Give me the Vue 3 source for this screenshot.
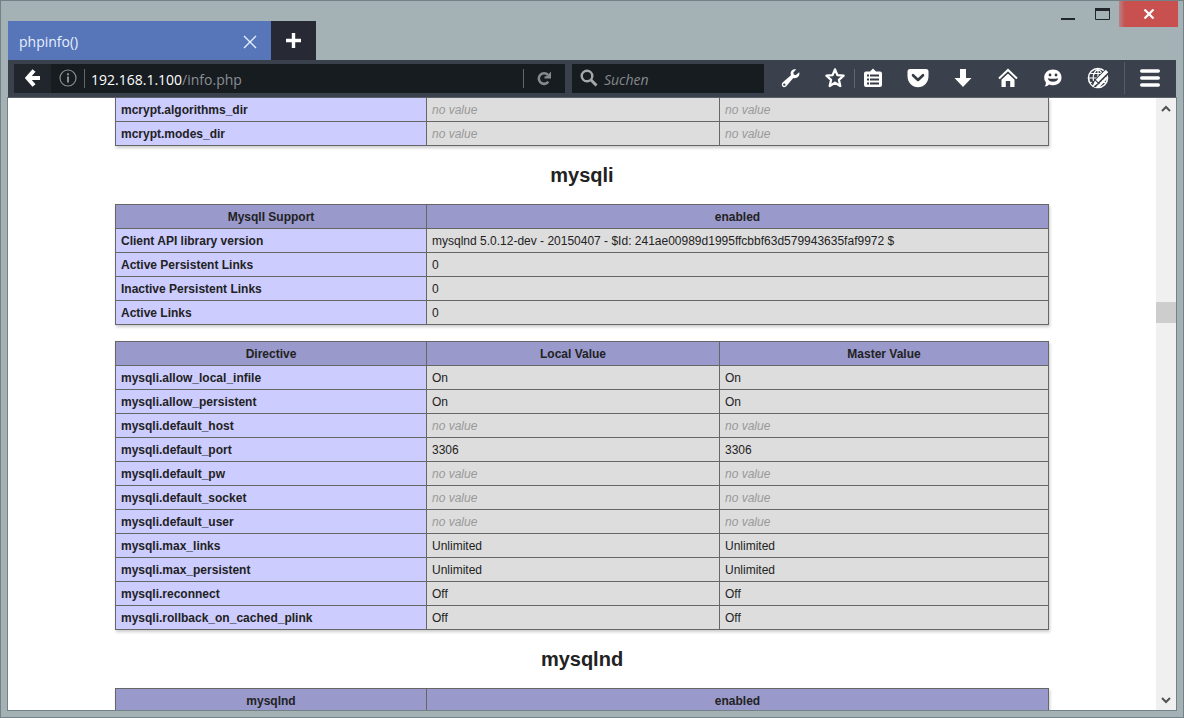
<script setup>
const mcrypt = ['mcrypt.algorithms_dir', 'mcrypt.modes_dir']
const support = [
  ['Client API library version', 'mysqlnd 5.0.12-dev - 20150407 - $Id: 241ae00989d1995ffcbbf63d579943635faf9972 $'],
  ['Active Persistent Links', '0'],
  ['Inactive Persistent Links', '0'],
  ['Active Links', '0']
]
const directives = [
  ['mysqli.allow_local_infile', 'On'],
  ['mysqli.allow_persistent', 'On'],
  ['mysqli.default_host', ''],
  ['mysqli.default_port', '3306'],
  ['mysqli.default_pw', ''],
  ['mysqli.default_socket', ''],
  ['mysqli.default_user', ''],
  ['mysqli.max_links', 'Unlimited'],
  ['mysqli.max_persistent', 'Unlimited'],
  ['mysqli.reconnect', 'Off'],
  ['mysqli.rollback_on_cached_plink', 'Off']
]
</script>

<template>
  <div class="window">
    <header class="titlebar">
      <div class="tab">
        <span>phpinfo()</span>
        <button class="tab-close" aria-label="Close tab">
          <svg width="14" height="14" viewBox="0 0 14 14"><path d="M1 1 13 13M13 1 1 13" stroke="#e6f0ff" stroke-width="1.4" /></svg>
        </button>
      </div>
      <button class="new-tab" aria-label="New tab">
        <svg width="17" height="17" viewBox="0 0 17 17"><path d="M8.500 1V16M1 8.500H16" stroke="#fff" stroke-width="3.400" /></svg>
      </button>
      <div class="controls">
        <button class="ctl" aria-label="Minimize">
          <svg width="14" height="14" viewBox="0 0 14 14"><path d="M0 12H14" stroke="#20262c" stroke-width="2" /></svg>
        </button>
        <button class="ctl" aria-label="Maximize">
          <svg width="15" height="12" viewBox="0 0 15 12"><path d="M.5.500H14.500V11.500H.5Z" fill="none" stroke="#20262c" /><path d="M0 0H15V3H0Z" fill="#20262c" /></svg>
        </button>
        <button class="close" aria-label="Close">
          <svg width="12" height="10" viewBox="0 0 12 10"><path d="M1.500.5 10.500 9.500M10.500.5 1.500 9.500" stroke="#fff" stroke-width="2.200" /></svg>
        </button>
      </div>
    </header>

    <nav class="toolbar" aria-label="Navigation">
      <button class="back" aria-label="Back">
        <svg width="16" height="18" viewBox="0 0 16 18"><path d="M9 1.500 2.500 9 9 16.500M3 9H15" fill="none" stroke="#fff" stroke-width="4" /></svg>
      </button>
      <div class="urlbar">
        <button class="info" aria-label="Site information">
          <svg width="18" height="18" viewBox="0 0 18 18"><circle cx="9" cy="9" r="8" fill="none" stroke="#8b8e91" stroke-width="1.200" /><path d="M9 7.500V13.500M9 4.300V6.200" stroke="#8b8e91" stroke-width="2" /></svg>
        </button>
        <span class="thin-sep"></span>
        <a class="address" href="#"><b>192.168.1.100</b>/info.php</a>
        <span class="thin-sep"></span>
        <button class="reload" aria-label="Reload">
          <svg width="15" height="15" viewBox="0 0 15 15"><path d="M11.300 10.800A5.300 5.300 0 1 1 11 4" fill="none" stroke="#868a8c" stroke-width="2.600" /><path d="M14 .5V7.500H7.500V5.500L10 5Z" fill="#868a8c" /></svg>
        </button>
      </div>
      <label class="search">
        <svg width="18" height="18" viewBox="0 0 18 18"><circle cx="7" cy="7" r="5.300" fill="none" stroke="#a5a8aa" stroke-width="2.400" /><path d="M10.800 10.800 16.500 16.500" stroke="#a5a8aa" stroke-width="3" /></svg>
        <input type="text" placeholder="Suchen" aria-label="Suchen" />
      </label>
      <div class="group first">
        <button aria-label="Developer tools">
          <svg width="20" height="20" viewBox="0 0 20 20"><path fill="#fff" fill-rule="evenodd" d="M18.200 4.200 15 7.100 12.900 6.700 12.300 4.600 15.200 1.600C12.500.4 9.500 2.600 9.600 5.600L9.900 7.300 1.600 14.500C0 16.200.8 18.800 3 19.200 4.200 19.300 5.200 18.500 5.700 17.800L12.300 10C15.700 10.900 19.300 8.300 18.200 4.200ZM3.300 15.400A1.200 1.200 0 1 1 3.300 17.800A1.200 1.200 0 1 1 3.300 15.400Z" /></svg>
        </button>
        <button aria-label="Bookmark this page">
          <svg width="22" height="22" viewBox="0 0 22 22"><path fill="none" stroke="#fff" stroke-width="2.300" stroke-linejoin="round" d="M11 2.400 13.400 8.100 19.600 8.700 14.900 12.800 16.300 19 11 15.700 5.700 19 7.100 12.800 2.400 8.700 8.600 8.100Z" /></svg>
        </button>
      </div>
      <span class="thin-sep"></span>
      <div class="group">
        <button aria-label="Bookmarks list">
          <svg width="20" height="20" viewBox="0 0 20 20"><path fill="#fff" fill-rule="evenodd" d="M3 3.500H7L10 .5 13 3.500H17A2 2 0 0 1 19 5.500V17A2 2 0 0 1 17 19H3A2 2 0 0 1 1 17V5.500A2 2 0 0 1 3 3.500Z" /><path stroke="#343b45" stroke-width="1.800" d="M4 7.500H6M7 7.500H16M4 11.500H6M7 11.500H16M4 15.500H6M7 15.500H16" /></svg>
        </button>
        <button aria-label="Save to Pocket">
          <svg width="22" height="20" viewBox="0 0 22 20"><path fill="#fff" d="M3 1H19Q21.500 1 21.500 3.500V8C21.500 15 16.500 19.200 11 19.200S.5 15 .5 8V3.500Q.5 1 3 1Z" /><path fill="none" stroke="#343b45" stroke-width="2.600" stroke-linecap="round" stroke-linejoin="round" d="M6 7.200 11 12 16 7.200" /></svg>
        </button>
        <button aria-label="Downloads">
          <svg width="18" height="20" viewBox="0 0 18 20"><path fill="#fff" d="M6 1H12V10H17.500L9 19 .5 10H6Z" /></svg>
        </button>
        <button aria-label="Home">
          <svg width="20" height="20" viewBox="0 0 20 20"><path d="M1 10.500 10 2 19 10.500" fill="none" stroke="#fff" stroke-width="2" /><path fill="#fff" d="M3.500 11.500 10 5.500 16.500 11.500V19H12.200V13H7.800V19H3.500Z" /><path d="M2.500 11.700 10 4.700 17.500 11.700" fill="none" stroke="#343b45" stroke-width=".8" /></svg>
        </button>
        <button aria-label="Hello">
          <svg width="20" height="20" viewBox="0 0 20 20"><path fill="#fff" d="M10 1.500C15 1.500 18.500 4.800 18.500 9.500S15 17 10.500 17.200C8.500 17.300 7 16.800 6 16.500 5 17.800 3.500 18.500 1.500 18.500 2.500 17.500 2.900 16 2.900 14.500 1.900 13 1.200 11.500 1.200 9.500 1.200 4.800 5 1.500 10 1.500Z" /><circle cx="7" cy="7" r="1.400" fill="#343b45" /><circle cx="13" cy="7" r="1.400" fill="#343b45" /><path d="M4.800 10.200Q10 11.400 15.200 10.200C14.500 15 5.500 15 4.800 10.200Z" fill="#343b45" /></svg>
        </button>
        <button aria-label="Language tools">
          <svg width="24" height="22" viewBox="0 0 24 22"><circle cx="12" cy="11" r="9.500" fill="none" stroke="#fff" stroke-width="1.600" /><path d="M12 2C5.500 7 5.500 15 12 20M12 2C18.500 7 18.500 15 12 20M12 2V20M3 11H21M4.500 6.500H19.500M4.500 15.500H19.500" fill="none" stroke="#fff" stroke-width="1.200" /><path d="M21.500 4 7 18.500" stroke="#343b45" stroke-width="6" /><path d="M21 4 11 14" stroke="#fff" stroke-width="3.600" /><path d="M9 13.500 11.800 16.300 6 20.500Z" fill="#fff" /><path d="M12 20 21 10.500" stroke="#fff" stroke-width="2.400" /></svg>
        </button>
      </div>
      <span class="tall-sep"></span>
      <div class="group last">
        <button aria-label="Open menu">
          <svg width="20" height="18" viewBox="0 0 20 18"><path d="M1.700 2H18.300M1.700 9H18.300M1.700 16H18.300" stroke="#fff" stroke-width="3.400" stroke-linecap="round" /></svg>
        </button>
      </div>
    </nav>

    <div class="viewport">
      <main class="page">
        <table class="cut">
          <colgroup><col class="c1" /><col class="c2" /><col /></colgroup>
          <tbody>
            <tr v-for="name in mcrypt" :key="name">
              <th scope="row">{{ name }}</th>
              <td><i>no value</i></td>
              <td><i>no value</i></td>
            </tr>
          </tbody>
        </table>
        <h2>mysqli</h2>
        <table>
          <colgroup><col class="c1" /><col /></colgroup>
          <thead><tr><th>MysqlI Support</th><th>enabled</th></tr></thead>
          <tbody>
            <tr v-for="row in support" :key="row[0]">
              <th scope="row">{{ row[0] }}</th>
              <td>{{ row[1] }}</td>
            </tr>
          </tbody>
        </table>
        <table class="next">
          <colgroup><col class="c1" /><col class="c2" /><col /></colgroup>
          <thead><tr><th>Directive</th><th>Local Value</th><th>Master Value</th></tr></thead>
          <tbody>
            <tr v-for="row in directives" :key="row[0]">
              <th scope="row">{{ row[0] }}</th>
              <td v-for="n in 2" :key="n"><template v-if="row[1]">{{ row[1] }}</template><i v-else>no value</i></td>
            </tr>
          </tbody>
        </table>
        <h2>mysqlnd</h2>
        <table>
          <colgroup><col class="c1" /><col /></colgroup>
          <thead><tr><th>mysqlnd</th><th>enabled</th></tr></thead>
        </table>
      </main>
      <div class="scrollbar">
        <button aria-label="Scroll up"><svg width="10" height="7" viewBox="0 0 10 7"><path d="M1 6 5 2 9 6" fill="none" stroke="#505356" stroke-width="2" /></svg></button>
        <span class="before"></span>
        <span class="thumb"></span>
        <span class="after"></span>
        <button aria-label="Scroll down"><svg width="10" height="7" viewBox="0 0 10 7"><path d="M1 1 5 5 9 1" fill="none" stroke="#505356" stroke-width="2" /></svg></button>
      </div>
    </div>
  </div>
</template>

<style>
body { margin: 0; }
</style>

<style scoped>
* { box-sizing: border-box; }
button { display: flex; align-items: center; justify-content: center; padding: 0; border: 0; background: none; }
svg { display: block; flex: none; }
.window {
  display: flex; flex-direction: column; height: 100vh; overflow: hidden;
  padding: 0 7px 7px; border: 1px solid #728286; background: #a4b1b5;
  font-family: "Open Sans", "Noto Sans", sans-serif; font-size: 14px;
}
.titlebar { display: flex; flex: none; align-items: flex-end; height: 59px; }
.tab {
  display: flex; align-items: center; justify-content: space-between;
  width: 263px; height: 39px; padding: 2px 14px 0 11px; background: #5775b9; color: #e6f0ff;
}
.new-tab { width: 45px; height: 39px; background: #272a35; }
.controls { display: flex; align-self: flex-start; margin-left: auto; margin-right: -2px; }
.ctl { width: 34px; height: 26px; }
.close { width: 59px; height: 26px; background: linear-gradient(90deg, #b98286, #c8504f 6px); }
.toolbar {
  display: flex; flex: none; align-items: center; height: 38px; padding: 0 0 2px 6px;
  background: #3a404c; border-top: 1px solid #37424a; border-bottom: 1px solid #5b6066;
}
.back { width: 37px; height: 29px; background: #20262c; }
.urlbar { display: flex; align-items: center; flex: 1; height: 29px; background: #171c21; }
.info { width: 33px; height: 29px; }
.thin-sep { width: 1px; height: 19px; background: #62676e; }
.address { flex: 1; padding: 2px 0 0 6px; color: #8a8e92; text-decoration: none; white-space: nowrap; }
.address b { color: #fff; font-weight: 400; }
.reload { width: 41px; height: 29px; }
.search { display: flex; align-items: center; gap: 6px; width: 192px; height: 29px; margin-left: 7px; padding-left: 8px; background: #171c21; }
.search input { width: 150px; padding: 2px 0 0; border: 0; outline: 0; background: none; color: #fff; font: inherit; }
.search input::placeholder { color: #85898b; font-style: italic; opacity: 1; }
.group { display: flex; gap: 9px; }
.group button { width: 36px; height: 29px; }
.first { gap: 8px; margin: 0 1px 0 9px; }
.tall-sep { width: 1px; height: 32px; margin: 0 7px 0 8px; background: #555c66; }
.last { padding-right: 8px; }
.viewport { display: flex; flex: 1; min-height: 0; overflow: hidden; background: #fff; outline: 1px solid #728286; }
.toolbar, .titlebar { position: relative; }
.page { flex: 1; overflow: hidden; font-family: "Liberation Sans", Arial, sans-serif; color: #222; }
table {
  width: 934px; max-width: 100%; margin: 0 auto; table-layout: fixed; border-collapse: collapse;
  font-size: 12px; line-height: 15px; box-shadow: 1px 2px 3px #ccc;
}
.c1 { width: 311px; }
.c2 { width: 293px; }
.next { margin-top: 16px; }
th, td { padding: 5px 5px 3px; border: 1px solid #666; overflow-wrap: anywhere; }
.cut tr:first-child > * { border-top: 0; }
thead th { background: #9999cc; text-align: center; }
tbody th { background: #ccccff; text-align: left; }
td { background: #dddddd; }
td i { color: #999; }
h2 { margin: 17px 0; font-size: 20px; line-height: 24px; text-align: center; }
.scrollbar { display: flex; flex-direction: column; width: 20px; background: #f0f0f0; }
.scrollbar button { width: 20px; height: 20px; }
.before { flex: 184; }
.thumb { height: 21px; background: #cdcdcd; }
.after { flex: 367; }
</style>
